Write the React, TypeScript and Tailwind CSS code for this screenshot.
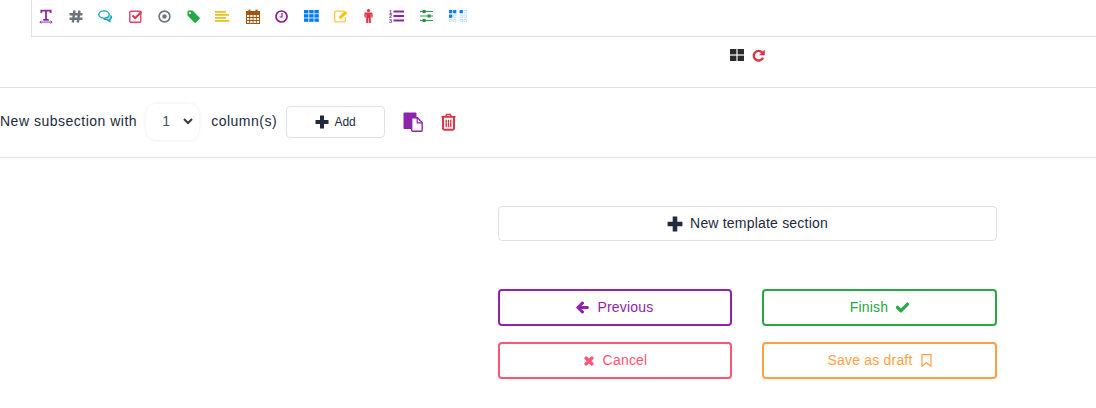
import { FaArrowLeft, FaCheck, FaTimes } from "react-icons/fa";

const PlusIcon = ({ size }: { size: number }) => (
	<svg width={size} height={size} viewBox="0 0 14 14" fill="#212b3d">
		<path d="M5 0.5H9V5H13.5V9H9V13.5H5V9H0.5V5H5Z" />
	</svg>
);

const TextIcon = () => (
	<svg width="15" height="15" viewBox="0 0 15 15" fill="none" stroke="#8e24aa">
		<path d="M2.5 3.8V1.2H12.5V3.8M7.5 1.2V11M4.5 11H10.5" strokeWidth="1.9" />
		<path d="M1 13.5H14M2.5 12L1 13.5L2.5 15M12.5 12L14 13.5L12.5 15" strokeWidth="1" />
	</svg>
);

const HashIcon = () => (
	<svg width="14" height="13" viewBox="0 0 14 13" fill="none" stroke="#6c757d" strokeWidth="2.4">
		<path d="M5.5 0.5L3.8 12.5M10.5 0.5L8.8 12.5M0.5 4.2H13.5M0.5 8.8H13.5" />
	</svg>
);

const ChatIcon = () => (
	<svg width="15" height="13" viewBox="0 0 15 13" fill="none" stroke="#17a2b8" strokeWidth="1.4">
		<ellipse cx="6" cy="4.5" rx="5.2" ry="3.6" />
		<path d="M12.6 5.5C14 7 13.5 8.8 11.8 9.5L11.8 11.5L9 9.6C7.5 9.8 6.5 9.5 5.5 8.5" fill="#17a2b8" fillOpacity="0.45" />
	</svg>
);

const CheckSquareIcon = () => (
	<svg width="14" height="13" viewBox="0 0 14 13" fill="none">
		<rect x="0.8" y="1.3" width="11" height="10.9" rx="1" stroke="#e83e6c" strokeWidth="1.4" />
		<path d="M3.5 5.5L6.2 8.2L12.5 1.8" stroke="#dc3545" strokeWidth="2" />
	</svg>
);

const RadioIcon = () => (
	<svg width="13" height="13" viewBox="0 0 13 13" fill="none">
		<circle cx="6.5" cy="6.5" r="5.4" stroke="#6c757d" strokeWidth="1.6" />
		<circle cx="6.5" cy="6.5" r="2.2" fill="#6c757d" />
	</svg>
);

const TagIcon = () => (
	<svg width="13" height="13" viewBox="0 0 13 13">
		<path d="M0.5 1.5C0.5 0.9 0.9 0.5 1.5 0.5H5.5L12.5 7.5C13 8 13 8.6 12.5 9L9 12.5C8.6 13 8 13 7.5 12.5L0.5 5.5Z" fill="#28a745" />
		<circle cx="3" cy="3" r="1" fill="#ffffff" />
	</svg>
);

const LinesIcon = () => (
	<svg width="15" height="11" viewBox="0 0 15 11" fill="#e6c229">
		<rect x="0" y="0" width="11" height="1.8" />
		<rect x="0" y="3" width="14" height="1.8" />
		<rect x="0" y="6" width="11" height="1.8" />
		<rect x="0" y="9" width="14.5" height="1.8" />
	</svg>
);

const CalendarIcon = () => (
	<svg width="14" height="15" viewBox="0 0 14 15" fill="none" stroke="#a0560f">
		<rect x="0.5" y="2.5" width="13" height="12" strokeWidth="1" />
		<rect x="0.5" y="2.5" width="13" height="3" fill="#a0560f" />
		<path d="M3.5 0.5V3.5M10.5 0.5V3.5" strokeWidth="2" />
		<path d="M0.5 8.5H13.5M0.5 11.5H13.5M3.7 5.5V14.5M7 5.5V14.5M10.3 5.5V14.5" strokeWidth="1" />
	</svg>
);

const ClockIcon = () => (
	<svg width="13" height="13" viewBox="0 0 13 13" fill="none" stroke="#8e1b8e">
		<circle cx="6.5" cy="6.5" r="5.5" strokeWidth="1.7" />
		<path d="M7 3V7H4.5" strokeWidth="1.2" />
	</svg>
);

const GridIcon = () => (
	<svg width="15" height="12" viewBox="0 0 15 12" fill="#007bff">
		{[0, 4.2, 8.4].map((y) =>
			[0, 5.2, 10.4].map((x) => <rect key={`${x}-${y}`} x={x} y={y} width="4.4" height="3.4" />),
		)}
	</svg>
);

const NoteIcon = () => (
	<svg width="14" height="13" viewBox="0 0 14 13" fill="none">
		<path d="M10 1.2H1.8C1.2 1.2 0.7 1.7 0.7 2.3V10.7C0.7 11.3 1.2 11.8 1.8 11.8H10.2C10.8 11.8 11.3 11.3 11.3 10.7V7" stroke="#ffc84a" strokeWidth="1.3" />
		<path d="M5 8.8L5.5 6.3L11 0.8L13.3 3L7.6 8.4Z" fill="#ffc107" />
	</svg>
);

const PersonIcon = () => (
	<svg width="9" height="14" viewBox="0 0 9 14" fill="#dc3545">
		<circle cx="4.5" cy="1.6" r="1.6" />
		<path d="M1.6 3.6H7.4C8.2 3.6 8.6 4 8.6 4.8V8.6H7.2V5.2H6.8V14H4.8V9H4.2V14H2.2V5.2H1.8V8.6H0.4V4.8C0.4 4 0.8 3.6 1.6 3.6Z" />
	</svg>
);

const ListIcon = () => (
	<svg width="15" height="14" viewBox="0 0 15 14" fill="#8e24aa">
		<rect x="4.5" y="1.5" width="10.5" height="2" />
		<rect x="4.5" y="6" width="10.5" height="2" />
		<rect x="4.5" y="10.5" width="10.5" height="2" />
		<text x="0" y="4.5" fontSize="5.5" fontWeight="700" fontFamily="Liberation Sans, sans-serif">1</text>
		<text x="0" y="9" fontSize="5.5" fontWeight="700" fontFamily="Liberation Sans, sans-serif">2</text>
		<text x="0" y="13.8" fontSize="5.5" fontWeight="700" fontFamily="Liberation Sans, sans-serif">3</text>
	</svg>
);

const SlidersIcon = () => (
	<svg width="13" height="12" viewBox="0 0 13 12">
		<path d="M0 1.5H13M0 6H13M0 10.5H13" stroke="#28a745" strokeWidth="1.2" />
		<rect x="2.5" y="0" width="3.2" height="3" fill="#2e8b4a" />
		<rect x="7.5" y="4.5" width="3.2" height="3" fill="#2e8b4a" />
		<rect x="2.5" y="9" width="3.2" height="3" fill="#2e8b4a" />
	</svg>
);

const DotsIcon = () => (
	<svg width="18" height="12" viewBox="0 0 18 12">
		{[0, 4.5, 9].map((y, row) =>
			[0, 4, 10.5, 14.5].map((x, col) => {
				const filled = (row === 0 && col < 3) || (row === 1 && col === 0);
				return (
					<rect
						key={`${x}-${y}`}
						x={x + 0.5}
						y={y + 0.5}
						width="2.4"
						height="2.4"
						fill={filled ? "#007bff" : "#ffffff"}
						stroke={filled ? "#007bff" : "#bcd9f5"}
						strokeWidth="0.8"
					/>
				);
			}),
		)}
	</svg>
);

const BookmarkIcon = () => (
	<svg width="11" height="13" viewBox="0 0 11 13" fill="none" stroke="#ff9f43" strokeWidth="1.2">
		<path d="M1 0.6H10V12.2L5.5 8.8L1 12.2Z" />
	</svg>
);

const CopyIcon = () => (
	<svg width="20" height="20" viewBox="0 0 20 20">
		<path d="M0.5 1.5C0.5 0.9 1 0.5 1.5 0.5H12.5C13 0.5 13.5 1 13.5 1.5V5H8V17H1.5C1 17 0.5 16.5 0.5 16Z" fill="#8e24aa" />
		<path d="M8.7 5.8H14.5L19.2 10.5V18.2C19.2 18.8 18.8 19.2 18.2 19.2H9.7C9.1 19.2 8.7 18.8 8.7 18.2Z" fill="#ffffff" stroke="#8e24aa" strokeWidth="1.4" />
		<path d="M14.2 5.8V10.8H19.2" fill="none" stroke="#8e24aa" strokeWidth="1.2" />
	</svg>
);

const TrashIcon = () => (
	<svg width="15" height="18" viewBox="0 0 16 18" fill="none" stroke="#dc3545">
		<path d="M0.5 3.5H15.5" strokeWidth="2" />
		<path d="M5 3.2L6 1H10L11 3.2" strokeWidth="1.6" />
		<path d="M2.2 3.5V16C2.2 16.8 2.7 17.2 3.4 17.2H12.6C13.3 17.2 13.8 16.8 13.8 16V3.5" strokeWidth="2.2" />
		<path d="M5.6 6.5V14.5M8 6.5V14.5M10.4 6.5V14.5" strokeWidth="1.4" />
	</svg>
);

const LayoutIcon = () => (
	<svg width="14" height="12" viewBox="0 0 14 12" fill="#2b2b2b">
		<rect x="0" y="0" width="6.4" height="5.4" />
		<rect x="7.6" y="0" width="6.4" height="5.4" />
		<rect x="0" y="6.6" width="6.4" height="5.4" />
		<rect x="7.6" y="6.6" width="6.4" height="5.4" />
	</svg>
);

const RepeatIcon = () => (
	<svg width="13" height="13" viewBox="0 0 13 13" fill="none">
		<path d="M10.4 3.8A4.8 4.8 0 1 0 11 8.6" stroke="#dc3545" strokeWidth="2.4" />
		<path d="M12.8 0.4V6.2H7Z" fill="#dc3545" />
	</svg>
);

const toolbarIcons = [
	{ icon: <TextIcon />, width: "w-[14px]" },
	{ icon: <HashIcon />, width: "w-[14px]" },
	{ icon: <ChatIcon />, width: "w-[15px]" },
	{ icon: <CheckSquareIcon />, width: "w-[14px]" },
	{ icon: <RadioIcon />, width: "w-[13px]" },
	{ icon: <TagIcon />, width: "w-[13px]" },
	{ icon: <LinesIcon />, width: "w-[15px]" },
	{ icon: <CalendarIcon />, width: "w-[14px]" },
	{ icon: <ClockIcon />, width: "w-[13px]" },
	{ icon: <GridIcon />, width: "w-[15px]" },
	{ icon: <NoteIcon />, width: "w-[14px]" },
	{ icon: <PersonIcon />, width: "w-[10px]" },
	{ icon: <ListIcon />, width: "w-[15px]" },
	{ icon: <SlidersIcon />, width: "w-[14px]" },
	{ icon: <DotsIcon />, width: "w-[18px]" },
];

const ActionButton = ({ className, children }: { className: string; children: React.ReactNode }) => (
	<div className={`flex h-[37px] items-center justify-center gap-[8px] rounded-[4px] border-2 bg-white text-[14px] tracking-[0.2px] ${className}`}>
		{children}
	</div>
);

export default function App() {
	return (
		<div className="h-[408px] w-[1096px] overflow-hidden bg-white font-['Liberation_Sans',Arial,sans-serif] text-[14px] text-[#212b3d]">
			<div className="ml-[31px] flex h-[37px] items-center gap-[15.5px] border-b border-l border-[#dee2e6] pb-[4px] pl-[7px]">
				{toolbarIcons.map((item, i) => (
					<span key={i} className={`flex justify-center ${item.width}`}>
						{item.icon}
					</span>
				))}
			</div>

			<div className="flex h-[51px] items-start gap-[8px] border-b border-[#dee2e6] pt-[12px] pl-[730px]">
				<LayoutIcon />
				<RepeatIcon />
			</div>

			<div className="flex h-[70px] items-center border-b border-[#dee2e6] pb-[2px] tracking-[0.5px]">
				<span>New subsection with</span>
				<div className="ml-[9px] flex h-[36px] w-[53px] items-center justify-between rounded-[10px] bg-white pr-[6px] pl-[16px] shadow-[0_0_4px_rgba(0,0,0,0.08)]">
					<span className="text-[#495057]">1</span>
					<svg width="10" height="7" viewBox="0 0 10 7" fill="none" stroke="#343a40" strokeWidth="2">
						<path d="M1 1L5 5L9 1" />
					</svg>
				</div>
				<span className="ml-[12px]">column(s)</span>
				<div className="ml-[9px] flex h-[32px] w-[99px] items-center justify-center gap-[5px] rounded-[4px] border border-[#dee2e6] text-[12px] tracking-normal">
					<PlusIcon size={14} />
					<span>Add</span>
				</div>
				<span className="ml-[18px] flex">
					<CopyIcon />
				</span>
				<span className="ml-[18px] flex">
					<TrashIcon />
				</span>
			</div>

			<div className="ml-[498px] w-[499px] pt-[48px]">
				<div className="flex h-[35px] items-center justify-center gap-[7px] rounded-[4px] border border-[#dee2e6] tracking-[0.2px]">
					<PlusIcon size={16} />
					<span>New template section</span>
				</div>

				<div className="mt-[48px] grid grid-cols-[234px_235px] gap-x-[30px] gap-y-[16px]">
					<ActionButton className="border-[#8e24aa] text-[#8e24aa]">
						<FaArrowLeft className="text-[13px]" stroke="currentColor" strokeWidth={40} />
						<span>Previous</span>
					</ActionButton>
					<ActionButton className="border-[#28a745] text-[#28a745]">
						<span>Finish</span>
						<FaCheck className="text-[13px]" stroke="currentColor" strokeWidth={30} />
					</ActionButton>
					<ActionButton className="border-[#ff5473] text-[#ff5473]">
						<FaTimes className="text-[12px]" stroke="currentColor" strokeWidth={50} />
						<span>Cancel</span>
					</ActionButton>
					<ActionButton className="border-[#ff9f43] text-[#ff9f43]">
						<span>Save as draft</span>
						<BookmarkIcon />
					</ActionButton>
				</div>
			</div>
		</div>
	);
}
